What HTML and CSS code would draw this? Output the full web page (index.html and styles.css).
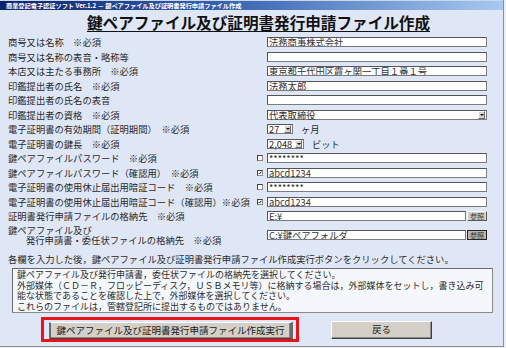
FILE: index.html
```html
<!DOCTYPE html>
<html lang="ja">
<head>
    <meta charset="UTF-8">
    <title>鍵ペアファイル及び証明書発行申請ファイル作成</title>
    <link rel="stylesheet" href="styles.css">
</head>
<body>
    <div class="window">
        <div class="titlebar">商業登記電子認証ソフト Ver.1.2 － 鍵ペアファイル及び証明書発行申請ファイル作成</div>

        <div class="content">
            <h1 class="heading"><span>鍵ペアファイル及び証明書発行申請ファイル作成</span></h1>

            <div class="form">
                <div class="row">
                    <span class="label">商号又は名称　※必須</span><span></span>
                    <div class="field"><input class="text" type="text" value="法務商事株式会社"></div>
                </div>
                <div class="row">
                    <span class="label">商号又は名称の表音・略称等</span><span></span>
                    <div class="field"><input class="text" type="text" value=""></div>
                </div>
                <div class="row">
                    <span class="label">本店又は主たる事務所　※必須</span><span></span>
                    <div class="field"><input class="text" type="text" value="東京都千代田区霞ヶ関一丁目１番１号"></div>
                </div>
                <div class="row">
                    <span class="label">印鑑提出者の氏名　※必須</span><span></span>
                    <div class="field"><input class="text" type="text" value="法務太郎"></div>
                </div>
                <div class="row">
                    <span class="label">印鑑提出者の氏名の表音</span><span></span>
                    <div class="field"><input class="text" type="text" value=""></div>
                </div>
                <div class="row">
                    <span class="label">印鑑提出者の資格　※必須</span><span></span>
                    <div class="field">
                        <div class="select wide"><span class="value">代表取締役</span><span class="arrow"></span></div>
                    </div>
                </div>
                <div class="row">
                    <span class="label">電子証明書の有効期間（証明期間）　※必須</span><span></span>
                    <div class="field">
                        <div class="select w-month"><span class="value">27</span><span class="arrow"></span></div>
                        <span class="unit">ヶ月</span>
                    </div>
                </div>
                <div class="row">
                    <span class="label">電子証明書の鍵長　※必須</span><span></span>
                    <div class="field">
                        <div class="select w-bits"><span class="value">2,048</span><span class="arrow"></span></div>
                        <span class="unit">ビット</span>
                    </div>
                </div>
                <div class="row">
                    <span class="label">鍵ペアファイルパスワード　※必須</span>
                    <span class="check"></span>
                    <div class="field"><input class="text" type="text" value="********"></div>
                </div>
                <div class="row">
                    <span class="label">鍵ペアファイルパスワード（確認用）　※必須</span>
                    <span class="check checked"><svg viewBox="0 0 6 6"><polyline points="1,3 2.4,4.5 5,1.2"/></svg></span>
                    <div class="field"><input class="text" type="text" value="abcd1234"></div>
                </div>
                <div class="row">
                    <span class="label">電子証明書の使用休止届出用暗証コード　※必須</span>
                    <span class="check"></span>
                    <div class="field"><input class="text" type="text" value="********"></div>
                </div>
                <div class="row">
                    <span class="label">電子証明書の使用休止届出用暗証コード（確認用）※必須</span>
                    <span class="check checked"><svg viewBox="0 0 6 6"><polyline points="1,3 2.4,4.5 5,1.2"/></svg></span>
                    <div class="field"><input class="text" type="text" value="abcd1234"></div>
                </div>
                <div class="row">
                    <span class="label">証明書発行申請ファイルの格納先　※必須</span><span></span>
                    <div class="field">
                        <input class="text" type="text" value="E:¥">
                        <button class="browse" type="button">参照</button>
                    </div>
                </div>
                <div class="row double">
                    <span class="label">鍵ペアファイル及び<br><span class="indent">発行申請書・委任状ファイルの格納先　※必須</span></span><span></span>
                    <div class="field">
                        <input class="text" type="text" value="C:¥鍵ペアフォルダ">
                        <button class="browse active" type="button">参照</button>
                    </div>
                </div>
            </div>

            <p class="note">各欄を入力した後，鍵ペアファイル及び証明書発行申請ファイル作成実行ボタンをクリックしてください。</p>

            <div class="info">
                鍵ペアファイル及び発行申請書，委任状ファイルの格納先を選択してください。<br>
                外部媒体（ＣＤ－Ｒ，フロッピーディスク，ＵＳＢメモリ等）に格納する場合は，外部媒体をセットし，書き込み可<br>
                能な状態であることを確認した上で，外部媒体を選択してください。<br>
                これらのファイルは，管轄登記所に提出するものではありません。
            </div>

            <div class="actions">
                <div class="highlight">
                    <button class="btn btn-main" type="button">鍵ペアファイル及び証明書発行申請ファイル作成実行</button>
                </div>
                <button class="btn btn-back" type="button">戻る</button>
            </div>
        </div>
    </div>
</body>
</html>
```

FILE: styles.css
```css
* {
    box-sizing: border-box;
}

body {
    margin: 0;
    background: #eceef2;
    font-family: "Noto Sans CJK JP", "DejaVu Sans", sans-serif;
    color: #2a2a2a;
}

.window {
    width: 504px;
    height: 347px;
    background: #dfe7f6;
    border-right: 1px solid #8e8e8e;
    border-bottom: 1px solid #8e8e8e;
    overflow: hidden;
}

.titlebar {
    height: 10px;
    padding-left: 6px;
    background: linear-gradient(to right, #0a246a, #3a62b0 45%, #a6caf0);
    border-top: 1px solid #c8d8ee;
    color: #fff;
    font-size: 6.2px;
    font-weight: bold;
    line-height: 9px;
    white-space: nowrap;
}

.content {
    padding-left: 8px;
}

.heading {
    margin: 0;
    height: 25px;
    padding-left: 6px;
    text-align: center;
    font-size: 15.6px;
    font-weight: bold;
    line-height: 25px;
    color: #111;
}

.heading span {
    text-decoration: underline;
    text-decoration-thickness: 1px;
    text-underline-offset: 2px;
}

/* form rows */
.form {
    display: flex;
    flex-direction: column;
}

.row {
    display: grid;
    grid-template-columns: 247px 12px 220px;
    align-items: center;
    height: 14.5px;
}

.row.double {
    height: 22px;
}

.label {
    font-size: 9.3px;
    line-height: 10px;
    white-space: nowrap;
}

.label .indent {
    padding-left: 18px;
}

.field {
    display: flex;
    align-items: center;
    gap: 1px;
    height: 10px;
}

.text {
    flex: 1;
    width: 100%;
    height: 10px;
    margin: 0;
    padding: 0 1px;
    border: 1px solid #7c7c7c;
    border-top-color: #555;
    border-left-color: #555;
    background: #fff;
    font-family: inherit;
    font-size: 9.3px;
    line-height: 8px;
    color: #333;
    outline: none;
}

.select {
    display: flex;
    height: 10px;
    border: 1px solid #7c7c7c;
    border-top-color: #555;
    border-left-color: #555;
    background: #fff;
}

.select.wide {
    width: 100%;
}

.select.w-month {
    width: 26px;
}

.select.w-bits {
    width: 37px;
}

.select .value {
    flex: 1;
    padding-left: 1px;
    font-size: 9.3px;
    line-height: 8px;
    white-space: nowrap;
}

.select .arrow {
    position: relative;
    width: 7px;
    margin: 0 1px 0 0;
    background: #d6d3cc;
    border: 1px solid;
    border-color: #fff #6a6a6a #6a6a6a #fff;
}

.select .arrow::after {
    content: "";
    position: absolute;
    left: 1px;
    top: 2px;
    border-left: 2px solid transparent;
    border-right: 2px solid transparent;
    border-top: 2px solid #111;
}

.unit {
    margin-left: 7px;
    font-size: 9.3px;
    line-height: 10px;
}

.check {
    width: 6px;
    height: 6px;
    margin-left: 2px;
    border: 1px solid #8a8a8a;
    border-top-color: #444;
    border-left-color: #444;
    background: #fff;
}

.check svg {
    display: block;
    width: 4px;
    height: 4px;
    fill: none;
    stroke: #111;
    stroke-width: 1.4;
}

.browse {
    width: 20px;
    height: 10px;
    margin: 0;
    padding: 0;
    border: 1px solid;
    border-color: #fff #5a5a5a #5a5a5a #fff;
    background: #d4d0c8;
    font-family: inherit;
    font-size: 7px;
    line-height: 8px;
    color: #333;
}

.browse.active {
    border-color: #222;
    background: #b9b6ae;
}

.note {
    margin: 8.5px 0 0;
    height: 10px;
    font-size: 9.3px;
    line-height: 10px;
    white-space: nowrap;
}

.info {
    width: 481px;
    height: 45px;
    margin: 4px 0 0 4px;
    padding: 1px 0 0 4px;
    border: 1px solid #8a8a8a;
    border-top-color: #6a6a6a;
    border-left-color: #6a6a6a;
    background: #f4f8fd;
    font-size: 9px;
    line-height: 10.5px;
    white-space: nowrap;
    overflow: hidden;
}

/* buttons */
.actions {
    display: flex;
    align-items: center;
    margin-top: 4px;
    padding-left: 33px;
}

.highlight {
    display: flex;
    width: 258px;
    height: 25px;
    padding: 1px 3px 0 5px;
    border: 3px solid #e8141c;
    align-items: center;
}

.btn {
    margin: 0;
    height: 17px;
    padding: 0;
    border: 1px solid;
    border-color: #fff #404040 #404040 #fff;
    box-shadow: inset -1px -1px #8a8a8a;
    background: #d4d0c8;
    font-family: inherit;
    font-size: 9.5px;
    line-height: 15px;
    color: #1a1a1a;
}

.btn-main {
    width: 244px;
    border-left: 2px solid #6a6a6a;
    border-right: 3px solid #6a6a6a;
}

.btn-back {
    width: 101px;
    height: 18px;
    margin-left: 32px;
}
```
